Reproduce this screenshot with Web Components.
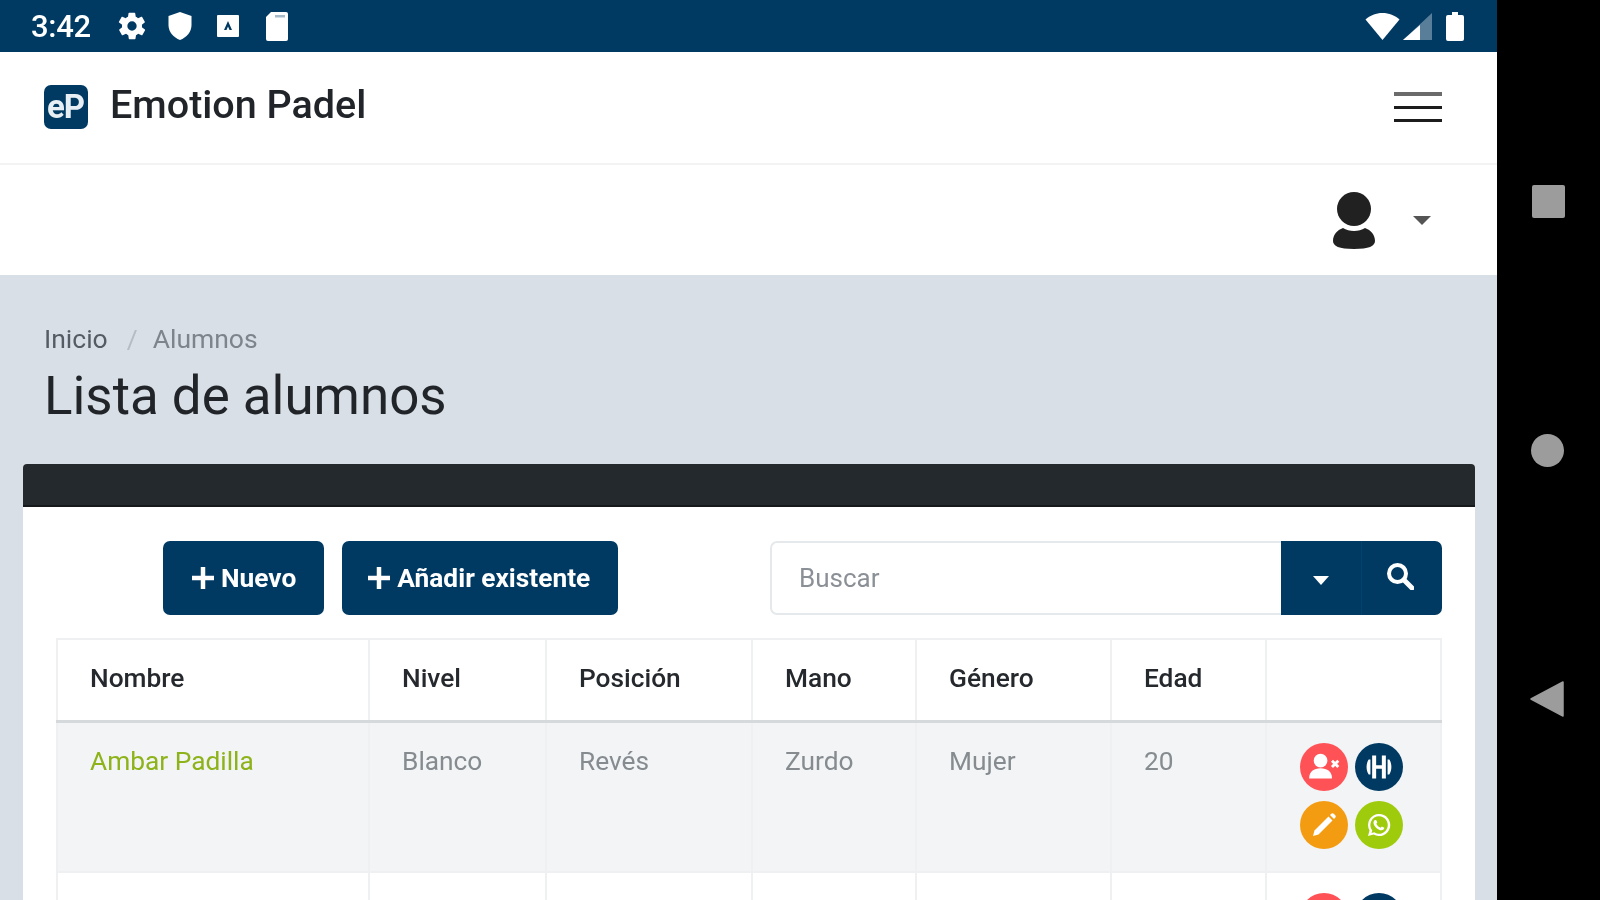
<!DOCTYPE html>
<html lang="es">
<head>
<meta charset="utf-8">
<title>Emotion Padel</title>
<style>
  html, body { margin: 0; height: 100%; overflow: hidden; background: #000; font-family: Roboto, "Liberation Sans", sans-serif; }
</style>
</head>
<body>
<phone-frame>
  <status-bar></status-bar>
  <top-navbar title-text="Emotion Padel"></top-navbar>
  <user-bar></user-bar>
  <page-content>
    <bread-crumbs current="Alumnos">Inicio</bread-crumbs>
    <h-title>Lista de alumnos</h-title>
    <data-card>
      <card-toolbar>
        <action-button>Nuevo</action-button>
        <action-button style="--pad-left: 25px">Añadir existente</action-button>
        <search-box slot="search" placeholder="Buscar"></search-box>
      </card-toolbar>
      <students-table></students-table>
    </data-card>
  </page-content>
</phone-frame>

<script>
const NAVY = "#003a63";

class PhoneFrame extends HTMLElement {
  connectedCallback() {
    this.attachShadow({ mode: "open" }).innerHTML = `
      <style>
        :host { display: flex; width: 1600px; height: 900px; background: #000; overflow: hidden; }
        .screen { width: 1497px; height: 900px; background: #fff; overflow: hidden; display: flex; flex-direction: column; filter: blur(.7px); }
        .rail { width: 103px; display: flex; flex-direction: column; align-items: center; padding: 185px 0 0 0; box-sizing: border-box; filter: blur(.6px); }
        .square { width: 33px; height: 33px; background: #9c9c9c; border-radius: 2px; }
        .circle { width: 33px; height: 33px; background: #9c9c9c; border-radius: 50%; margin: 216px 2px 0 0; }
        svg { display: block; margin: 214px 3px 0 0; }
      </style>
      <div class="screen"><slot></slot></div>
      <div class="rail">
        <div class="square"></div>
        <div class="circle"></div>
        <svg width="35" height="36" viewBox="0 0 35 36"><path d="M1 18 33 1V35Z" fill="#9c9c9c" stroke="#9c9c9c" stroke-linejoin="round" stroke-width="1.5"/></svg>
      </div>`;
  }
}

class StatusBar extends HTMLElement {
  connectedCallback() {
    this.attachShadow({ mode: "open" }).innerHTML = `
      <style>
        :host { display: flex; flex: none; align-items: center; height: 52px; background: ${NAVY}; color: #fff; padding: 0 33px 0 31px; box-sizing: border-box; }
        .time { font: 500 31px/1 Roboto, sans-serif; width: 85px; letter-spacing: -.3px; margin-top: 1px; }
        .left { display: flex; align-items: center; }
        .right { margin-left: auto; display: flex; align-items: center; }
        svg { display: block; }
      </style>
      <span class="time">3:42</span>
      <div class="left">
        <svg width="32" height="32" viewBox="0 0 24 24" fill="#fff"><path d="M19.4 13c.1-.3.1-.7.1-1s0-.7-.1-1l2.1-1.6c.2-.2.2-.4.1-.6l-2-3.5c-.1-.2-.4-.3-.6-.2l-2.5 1c-.5-.4-1.1-.7-1.7-1l-.4-2.6c0-.3-.2-.5-.5-.5h-4c-.3 0-.5.2-.5.4l-.4 2.7c-.6.2-1.1.6-1.7 1l-2.5-1c-.2-.1-.5 0-.6.2l-2 3.5c-.1.2-.1.4.1.6L4.6 11c-.1.3-.1.7-.1 1s0 .7.1 1l-2.1 1.6c-.2.2-.2.4-.1.6l2 3.5c.1.2.4.3.6.2l2.5-1c.5.4 1.1.7 1.7 1l.4 2.6c0 .2.2.4.5.4h4c.3 0 .5-.2.5-.4l.4-2.6c.6-.3 1.2-.6 1.7-1l2.5 1c.2.1.5 0 .6-.2l2-3.5c.1-.2.1-.4-.1-.6L19.4 13zM12 15.5a3.5 3.5 0 1 1 0-7 3.5 3.5 0 0 1 0 7z"/></svg>
        <svg width="26" height="30" viewBox="0 0 26 30" fill="#fff" style="margin-left:19px"><path d="M13 1 1.500 5v9c0 7 5 12.500 11.500 15 6.500-2.500 11.500-8 11.500-15V5z"/></svg>
        <svg width="24" height="24" viewBox="0 0 24 24" style="margin-left:23px"><rect x="1" y="1" width="22" height="22" rx="1" fill="#fff"/><path d="M12 7 8 16h2.500l1.500-3.500 1.500 3.500H16z" fill="${NAVY}"/></svg>
        <svg width="24" height="30" viewBox="0 0 24 30" style="margin-left:25px"><path d="M6 1h15a2 2 0 0 1 2 2v25a2 2 0 0 1-2 2H3a2 2 0 0 1-2-2V6z" fill="#fff"/><path d="M10 4h10v2.500H10z" fill="${NAVY}" opacity=".35"/></svg>
      </div>
      <div class="right">
        <svg width="35" height="27" viewBox="0 0 35 27" fill="#fff"><path d="M17.500 27 .5 6.500C5 2.500 11 0 17.500 0S30 2.500 34.500 6.500z"/></svg>
        <svg width="29" height="27" viewBox="0 0 29 27" style="margin-left:3px"><path d="M29 0v27H0z" fill="#fff" opacity=".35"/><path d="M17 12v15H0z" fill="#fff"/></svg>
        <svg width="18" height="29" viewBox="0 0 18 29" fill="#fff" style="margin-left:14px"><path d="M6 0h6v3h4a2 2 0 0 1 2 2v22a2 2 0 0 1-2 2H2a2 2 0 0 1-2-2V5a2 2 0 0 1 2-2h4z"/></svg>
      </div>`;
  }
}

class TopNavbar extends HTMLElement {
  connectedCallback() {
    const title = this.getAttribute("title-text");
    this.attachShadow({ mode: "open" }).innerHTML = `
      <style>
        :host { display: flex; flex: none; align-items: center; height: 113px; padding: 0 55px 7px 44px; box-sizing: border-box; background: #fff; border-bottom: 2px solid #f3f3f3; }
        .logo { width: 44px; height: 44px; border-radius: 7px; background: ${NAVY}; color: #e8eff4; display: flex; align-items: center; justify-content: center; font: 700 33px/1 Roboto, sans-serif; letter-spacing: -1px; margin-top: 5px; padding-right: 1px; box-sizing: border-box; }
        .name { font: 500 39.500px/1 Roboto, sans-serif; color: #212529; margin-left: 22px; margin-top: 1px; white-space: nowrap; }
        .burger { margin-left: auto; width: 48px; display: flex; flex-direction: column; gap: 10px; margin-top: 5px; }
        .burger i { display: block; height: 3px; background: #1c1c1c; }
        .burger i:first-child { background: #6b6b6b; height: 4px; }
      </style>
      <div class="logo">eP</div>
      <span class="name">${title}</span>
      <div class="burger"><i></i><i></i><i></i></div>`;
  }
}

class UserBar extends HTMLElement {
  connectedCallback() {
    this.attachShadow({ mode: "open" }).innerHTML = `
      <style>
        :host { display: flex; flex: none; align-items: center; justify-content: flex-end; height: 110px; padding: 0 66px 0 0; box-sizing: border-box; background: #fff; }
        svg { display: block; }
        .caret { width: 0; height: 0; border: 9px solid transparent; border-top: 9px solid #555; border-bottom: 0; margin: 0 0 0 37px; }
      </style>
      <svg width="44" height="58" viewBox="0 0 44 58" fill="#212121">
        <circle cx="22" cy="18" r="17"/>
        <path d="M11 37c3 2 7 3 11 3s8-1 11-3c6 2 10 7 10 13 0 5-6 8-21 8S1 55 1 50c0-6 4-11 10-13z"/>
      </svg>
      <div class="caret"></div>`;
  }
}

class PageContent extends HTMLElement {
  connectedCallback() {
    this.attachShadow({ mode: "open" }).innerHTML = `
      <style>
        :host { display: block; flex: 1; min-height: 0; background: #d8dfe7; padding: 50px 22px 0 23px; overflow: hidden; }
      </style>
      <slot></slot>`;
  }
}

class BreadCrumbs extends HTMLElement {
  connectedCallback() {
    this.attachShadow({ mode: "open" }).innerHTML = `
      <style>
        :host { display: flex; align-items: center; height: 28px; margin-left: 21px; font: 400 26.500px/28px Roboto, sans-serif; color: #555c63; }
        .sep { color: #b6bcc3; margin: 0 15px 0 19px; }
        .cur { color: #7d848b; }
      </style>
      <slot></slot><span class="sep">/</span><span class="cur">${this.getAttribute("current")}</span>`;
  }
}

class HTitle extends HTMLElement {
  connectedCallback() {
    this.attachShadow({ mode: "open" }).innerHTML = `
      <style>
        :host { display: block; margin: 14px 0 0 21px; height: 97px; font: 400 52.900px/58px Roboto, sans-serif; color: #212529; }
      </style>
      <slot></slot>`;
  }
}

class DataCard extends HTMLElement {
  connectedCallback() {
    this.attachShadow({ mode: "open" }).innerHTML = `
      <style>
        :host { display: block; background: #fff; border-radius: 4px 4px 0 0; overflow: hidden; }
        .head { height: 43px; box-sizing: border-box; background: #24292e; border-bottom: 2px solid #15191c; }
        .body { padding: 34px 33px 0 33px; }
      </style>
      <div class="head"></div>
      <div class="body"><slot></slot></div>`;
  }
}

class CardToolbar extends HTMLElement {
  connectedCallback() {
    this.attachShadow({ mode: "open" }).innerHTML = `
      <style>
        :host { display: flex; align-items: stretch; gap: 18px; height: 74px; padding-left: 107px; margin-bottom: 23px; }
        .push { margin-left: auto; display: flex; }
      </style>
      <slot></slot>
      <div class="push"><slot name="search"></slot></div>`;
  }
}

class ActionButton extends HTMLElement {
  connectedCallback() {
    this.attachShadow({ mode: "open" }).innerHTML = `
      <style>
        :host { display: flex; align-items: center; box-sizing: border-box; padding: 0 28px 0 var(--pad-left, 28px); background: ${NAVY}; color: #fff; border-radius: 7px; font: 700 26.300px/1 Roboto, sans-serif; gap: 6px; white-space: nowrap; }
        svg { display: block; flex: none; }
      </style>
      <svg width="24" height="24" viewBox="0 0 24 24"><path d="M12 1v22M1 12h22" stroke="#fff" stroke-width="4.500"/></svg>
      <slot></slot>`;
  }
}

class SearchBox extends HTMLElement {
  connectedCallback() {
    this.attachShadow({ mode: "open" }).innerHTML = `
      <style>
        :host { display: flex; width: 672px; height: 74px; }
        .field { flex: 1; box-sizing: border-box; border: 2px solid #e6e9ec; border-right: 0; border-radius: 7px 0 0 7px; padding-left: 27px; display: flex; align-items: center; font: 400 26px/1 Roboto, sans-serif; color: #8b9096; }
        .btn { width: 80px; display: flex; align-items: center; justify-content: center; background: ${NAVY}; }
        .btn.last { border-radius: 0 7px 7px 0; width: 81px; border-left: 1px solid #04426e; box-sizing: border-box; }
        .caret { width: 0; height: 0; border: 8px solid transparent; border-top: 9px solid #fff; border-bottom: 0; margin-top: 4px; }
        svg { display: block; margin: -4px 5px 0 0; }
      </style>
      <div class="field">${this.getAttribute("placeholder")}</div>
      <div class="btn"><div class="caret"></div></div>
      <div class="btn last">
        <svg width="28" height="28" viewBox="0 0 28 28" fill="none" stroke="#fff"><circle cx="11.500" cy="11.500" r="8.500" stroke-width="4"/><path d="M18 18l8 8" stroke-width="5" stroke-linecap="round"/></svg>
      </div>`;
  }
}

class RoundIcon extends HTMLElement {
  connectedCallback() {
    const icons = {
      user: `<circle cx="11" cy="8.500" r="6"/><path d="M1 24c0-6 4-9 10-9s10 3 10 9z"/><path d="M21 8.500l5.500 5.500M26.500 8.500 21 14" stroke="#fff" stroke-width="2.500"/>`,
      gym: `<path d="M8 4h3.500v20H8zM16.500 4H20v20h-3.500zM11 12.500h6v3h-6z"/><path d="M5 7.500C2.500 11 2.500 17 5 20.500h1.500v-13zM23 7.500c2.500 3.500 2.500 9.500 0 13h-1.500v-13z"/>`,
      pencil: `<path d="M3 25l1.500-5.500L18.500 5.500l4 4L8.500 23.500z"/><path d="M20 4l1-1c1-1 2-1 3 0l1 1c1 1 1 2 0 3l-1 1z"/>`,
      whats: `<path fill-rule="evenodd" d="M14 3a11 11 0 0 0-9.500 16.500L3 25l5.700-1.500A11 11 0 1 0 14 3zm0 2.300a8.700 8.700 0 1 1-4.700 16l-2.800.8.800-2.700A8.700 8.700 0 0 1 14 5.300z"/><path d="M10.500 9c.8 0 1 .5 1.800 2.500l-1 1.300c1 2 2.300 3.200 4.300 4l1.200-1.300 2.500 1.300c0 1.300-1.200 2.500-2.800 2.500-3.700 0-8-4.300-8-7.600C8.500 10.200 9.300 9 10.500 9z"/>`
    };
    const size = this.getAttribute("icon") === "user" || this.getAttribute("icon") === "gym" ? 32 : 28;
    this.attachShadow({ mode: "open" }).innerHTML = `
      <style>
        :host { display: flex; align-items: center; justify-content: center; width: 48px; height: 48px; border-radius: 50%; background: ${this.getAttribute("color")}; }
        svg { display: block; }
      </style>
      <svg width="${size}" height="${size}" viewBox="0 0 28 28" fill="#fff">${icons[this.getAttribute("icon")]}</svg>`;
  }
}

class StudentsTable extends HTMLElement {
  connectedCallback() {
    const head = ["Nombre", "Nivel", "Posición", "Mano", "Género", "Edad", ""];
    const row = ["Ambar Padilla", "Blanco", "Revés", "Zurdo", "Mujer", "20"];
    const actions = `
      <div class="acts">
        <round-icon color="#ff5257" icon="user"></round-icon>
        <round-icon color="${NAVY}" icon="gym"></round-icon>
        <round-icon color="#f39c12" icon="pencil"></round-icon>
        <round-icon color="#9ecb0c" icon="whats"></round-icon>
      </div>`;
    this.attachShadow({ mode: "open" }).innerHTML = `
      <style>
        :host { display: block; }
        table { border-collapse: collapse; table-layout: fixed; width: 1384px; font: 400 26.300px/30px Roboto, sans-serif; color: #868b90; }
        th, td { border: 2px solid #eef0f2; padding: 0 0 0 32px; text-align: left; vertical-align: top; }
        th { height: 82px; padding-bottom: 4px; box-sizing: border-box; font-weight: 500; color: #25292d; vertical-align: middle; border-bottom: 3px solid #d6d9dc; }
        td { height: 151px; padding-top: 23px; box-sizing: border-box; }
        tr.alt td { background: #f2f4f6; }
        a { color: #8eb31a; text-decoration: none; }
        td.act { padding: 20px 0 0 33px; }
        .acts { display: grid; grid-template-columns: 48px 48px; gap: 10px 7px; }
      </style>
      <table>
        <colgroup><col style="width:312px"><col style="width:177px"><col style="width:206px"><col style="width:164px"><col style="width:195px"><col style="width:155px"><col style="width:175px"></colgroup>
        <thead><tr>${head.map(h => `<th>${h}</th>`).join("")}</tr></thead>
        <tbody>
          <tr class="alt">
            <td><a>${row[0]}</a></td>
            ${row.slice(1).map(c => `<td>${c}</td>`).join("")}
            <td class="act">${actions}</td>
          </tr>
          <tr class="next">
            <td></td><td></td><td></td><td></td><td></td><td></td>
            <td class="act">${actions}</td>
          </tr>
        </tbody>
      </table>`;
  }
}

customElements.define("round-icon", RoundIcon);
customElements.define("students-table", StudentsTable);
customElements.define("search-box", SearchBox);
customElements.define("action-button", ActionButton);
customElements.define("card-toolbar", CardToolbar);
customElements.define("data-card", DataCard);
customElements.define("h-title", HTitle);
customElements.define("bread-crumbs", BreadCrumbs);
customElements.define("page-content", PageContent);
customElements.define("user-bar", UserBar);
customElements.define("top-navbar", TopNavbar);
customElements.define("status-bar", StatusBar);
customElements.define("phone-frame", PhoneFrame);
</script>
</body>
</html>
